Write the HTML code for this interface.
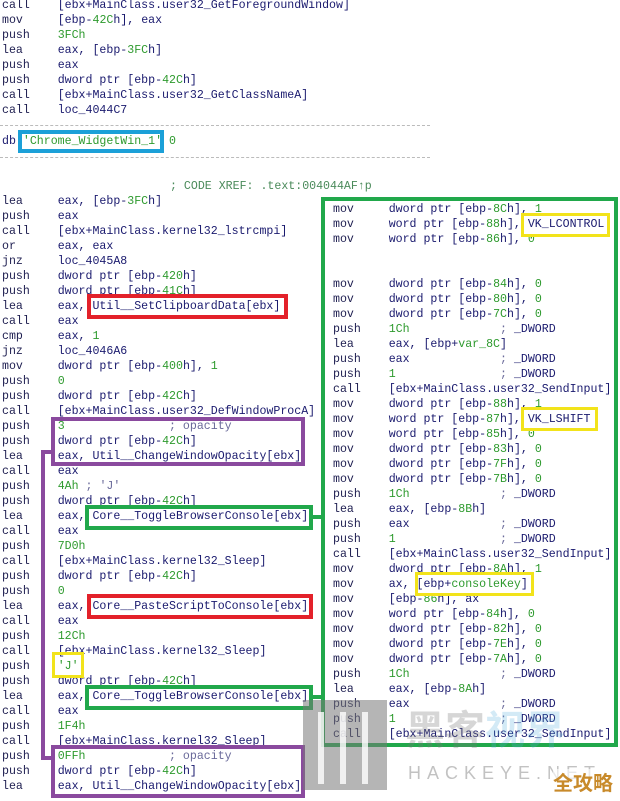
<!DOCTYPE html>
<html><head><meta charset="utf-8"><style>
body{margin:0;background:#fff;width:620px;height:801px;overflow:hidden;position:relative;font-family:"Liberation Mono",monospace;font-size:11.6px;color:#1a1a6e}
.b{position:absolute;line-height:15px;white-space:pre}
.m{display:inline-block;width:55.7px;color:#1e1e50}
.g{color:#2e9a2e}
.c{color:#6a6a9a}
.box{position:absolute;box-sizing:border-box}
.dash{position:absolute;left:0;width:430px;border-top:1px dashed #bbb}
</style></head><body>

<div class="b" style="left:2px;top:-2px"><span class="m">call</span>[ebx+MainClass.user32_GetForegroundWindow]
<span class="m">mov</span>[ebp-<span class="g">42C</span>h], eax
<span class="m">push</span><span class="g">3FCh</span>
<span class="m">lea</span>eax, [ebp-<span class="g">3FC</span>h]
<span class="m">push</span>eax
<span class="m">push</span>dword ptr [ebp-<span class="g">42C</span>h]
<span class="m">call</span>[ebx+MainClass.user32_GetClassNameA]
<span class="m">call</span>loc_4044C7</div>

<div class="dash" style="top:125px"></div>
<div class="box" style="left:18px;top:130px;width:146px;height:23px;border:4px solid #1ba0d8"></div>
<div class="b" style="left:2px;top:134px">db <span class="g">'Chrome_WidgetWin_1'</span> <span class="g">0</span></div>
<div class="dash" style="top:157px"></div>
<div class="b" style="left:170px;top:179px;color:#4a8a5a">; CODE XREF: .text:004044AF↑p</div>

<div class="b" style="left:2px;top:194px"><span class="m">lea</span>eax, [ebp-<span class="g">3FC</span>h]
<span class="m">push</span>eax
<span class="m">call</span>[ebx+MainClass.kernel32_lstrcmpi]
<span class="m">or</span>eax, eax
<span class="m">jnz</span>loc_4045A8
<span class="m">push</span>dword ptr [ebp-<span class="g">420</span>h]
<span class="m">push</span>dword ptr [ebp-<span class="g">41C</span>h]
<span class="m">lea</span>eax, Util__SetClipboardData[ebx]
<span class="m">call</span>eax
<span class="m">cmp</span>eax, <span class="g">1</span>
<span class="m">jnz</span>loc_4046A6
<span class="m">mov</span>dword ptr [ebp-<span class="g">400</span>h], <span class="g">1</span>
<span class="m">push</span><span class="g">0</span>
<span class="m">push</span>dword ptr [ebp-<span class="g">42C</span>h]
<span class="m">call</span>[ebx+MainClass.user32_DefWindowProcA]
<span class="m">push</span><span class="g">3               </span><span class="c">; opacity</span>
<span class="m">push</span>dword ptr [ebp-<span class="g">42C</span>h]
<span class="m">lea</span>eax, Util__ChangeWindowOpacity[ebx]
<span class="m">call</span>eax
<span class="m">push</span><span class="g">4Ah</span> <span class="c">; 'J'</span>
<span class="m">push</span>dword ptr [ebp-<span class="g">42C</span>h]
<span class="m">lea</span>eax, Core__ToggleBrowserConsole[ebx]
<span class="m">call</span>eax
<span class="m">push</span><span class="g">7D0h</span>
<span class="m">call</span>[ebx+MainClass.kernel32_Sleep]
<span class="m">push</span>dword ptr [ebp-<span class="g">42C</span>h]
<span class="m">push</span><span class="g">0</span>
<span class="m">lea</span>eax, Core__PasteScriptToConsole[ebx]
<span class="m">call</span>eax
<span class="m">push</span><span class="g">12Ch</span>
<span class="m">call</span>[ebx+MainClass.kernel32_Sleep]
<span class="m">push</span><span class="g">'J'</span>
<span class="m">push</span>dword ptr [ebp-<span class="g">42C</span>h]
<span class="m">lea</span>eax, Core__ToggleBrowserConsole[ebx]
<span class="m">call</span>eax
<span class="m">push</span><span class="g">1F4h</span>
<span class="m">call</span>[ebx+MainClass.kernel32_Sleep]
<span class="m">push</span><span class="g">0FFh            </span><span class="c">; opacity</span>
<span class="m">push</span>dword ptr [ebp-<span class="g">42C</span>h]
<span class="m">lea</span>eax, Util__ChangeWindowOpacity[ebx]</div>

<div class="b" style="left:333px;top:202px"><span class="m">mov</span>dword ptr [ebp-<span class="g">8C</span>h], <span class="g">1</span>
<span class="m">mov</span>word ptr [ebp-<span class="g">88</span>h], VK_LCONTROL
<span class="m">mov</span>word ptr [ebp-<span class="g">86</span>h], <span class="g">0</span></div>

<div class="b" style="left:333px;top:277px"><span class="m">mov</span>dword ptr [ebp-<span class="g">84</span>h], <span class="g">0</span>
<span class="m">mov</span>dword ptr [ebp-<span class="g">80</span>h], <span class="g">0</span>
<span class="m">mov</span>dword ptr [ebp-<span class="g">7C</span>h], <span class="g">0</span>
<span class="m">push</span><span class="g">1Ch             </span><span class="c">; </span>_DWORD
<span class="m">lea</span>eax, [ebp+<span class="g">var_8C</span>]
<span class="m">push</span>eax             <span class="c">; </span>_DWORD
<span class="m">push</span><span class="g">1               </span><span class="c">; </span>_DWORD
<span class="m">call</span>[ebx+MainClass.user32_SendInput]
<span class="m">mov</span>dword ptr [ebp-<span class="g">88</span>h], <span class="g">1</span>
<span class="m">mov</span>word ptr [ebp-<span class="g">87</span>h], VK_LSHIFT
<span class="m">mov</span>word ptr [ebp-<span class="g">85</span>h], <span class="g">0</span>
<span class="m">mov</span>dword ptr [ebp-<span class="g">83</span>h], <span class="g">0</span>
<span class="m">mov</span>dword ptr [ebp-<span class="g">7F</span>h], <span class="g">0</span>
<span class="m">mov</span>dword ptr [ebp-<span class="g">7B</span>h], <span class="g">0</span>
<span class="m">push</span><span class="g">1Ch             </span><span class="c">; </span>_DWORD
<span class="m">lea</span>eax, [ebp-<span class="g">8B</span>h]
<span class="m">push</span>eax             <span class="c">; </span>_DWORD
<span class="m">push</span><span class="g">1               </span><span class="c">; </span>_DWORD
<span class="m">call</span>[ebx+MainClass.user32_SendInput]
<span class="m">mov</span>dword ptr [ebp-<span class="g">8A</span>h], <span class="g">1</span>
<span class="m">mov</span>ax, [ebp+<span class="g">consoleKey</span>]
<span class="m">mov</span>[ebp-<span class="g">86</span>h], ax
<span class="m">mov</span>word ptr [ebp-<span class="g">84</span>h], <span class="g">0</span>
<span class="m">mov</span>dword ptr [ebp-<span class="g">82</span>h], <span class="g">0</span>
<span class="m">mov</span>dword ptr [ebp-<span class="g">7E</span>h], <span class="g">0</span>
<span class="m">mov</span>dword ptr [ebp-<span class="g">7A</span>h], <span class="g">0</span>
<span class="m">push</span><span class="g">1Ch             </span><span class="c">; </span>_DWORD
<span class="m">lea</span>eax, [ebp-<span class="g">8A</span>h]
<span class="m">push</span>eax             <span class="c">; </span>_DWORD
<span class="m">push</span><span class="g">1               </span><span class="c">; </span>_DWORD
<span class="m">call</span>[ebx+MainClass.user32_SendInput]</div>

<div class="box" style="left:321px;top:197px;width:297px;height:550px;border:4px solid #21a84b"></div>
<div class="box" style="left:521px;top:213px;width:89px;height:24px;border:3px solid #f2e31a"></div>
<div class="box" style="left:521px;top:407px;width:77px;height:24px;border:3px solid #f2e31a"></div>
<div class="box" style="left:415px;top:572px;width:119px;height:24px;border:3px solid #f2e31a"></div>
<div class="box" style="left:52px;top:652px;width:32px;height:26px;border:3px solid #f2e31a"></div>
<div class="box" style="left:87px;top:294px;width:201px;height:25px;border:4px solid #e3212a"></div>
<div class="box" style="left:87px;top:594px;width:226px;height:25px;border:4px solid #e3212a"></div>
<div class="box" style="left:85px;top:505px;width:228px;height:25px;border:4px solid #21a84b"></div>
<div class="box" style="left:85px;top:685px;width:228px;height:25px;border:4px solid #21a84b"></div>
<div class="box" style="left:313px;top:515px;width:10px;height:4px;background:#21a84b"></div>
<div class="box" style="left:313px;top:695px;width:10px;height:4px;background:#21a84b"></div>
<div class="box" style="left:51px;top:417px;width:254px;height:49px;border:4px solid #8a4a9e"></div>
<div class="box" style="left:51px;top:745px;width:254px;height:53px;border:4px solid #8a4a9e"></div>
<div class="box" style="left:41px;top:450px;width:4px;height:310px;background:#8a4a9e"></div>
<div class="box" style="left:41px;top:450px;width:12px;height:4px;background:#8a4a9e"></div>
<div class="box" style="left:41px;top:756px;width:12px;height:4px;background:#8a4a9e"></div>

<div class="box" style="left:303px;top:700px;width:84px;height:90px;background:rgba(120,120,120,.55)"></div>
<div class="box" style="left:318px;top:712px;width:6px;height:72px;background:rgba(255,255,255,.8)"></div>
<div class="box" style="left:340px;top:712px;width:6px;height:72px;background:rgba(255,255,255,.8)"></div>
<div class="box" style="left:362px;top:712px;width:6px;height:72px;background:rgba(255,255,255,.8)"></div>
<div style="position:absolute;left:405px;top:702px;font:bold 40px 'Noto Sans CJK SC',sans-serif;line-height:50px;color:rgba(120,120,120,.3);white-space:nowrap">黑客<span style="color:rgba(80,170,220,.25)">视界</span></div>
<div style="position:absolute;left:408px;top:763px;font:18px 'Liberation Sans',sans-serif;color:rgba(120,120,120,.45);letter-spacing:6px;white-space:nowrap">HACKEYE.NET</div>
<div style="position:absolute;left:553px;top:769px;font:bold 20px 'Noto Sans CJK SC',sans-serif;line-height:26px;color:#c88a2a;background:rgba(255,255,255,.6)">全攻略</div>
</body></html>
